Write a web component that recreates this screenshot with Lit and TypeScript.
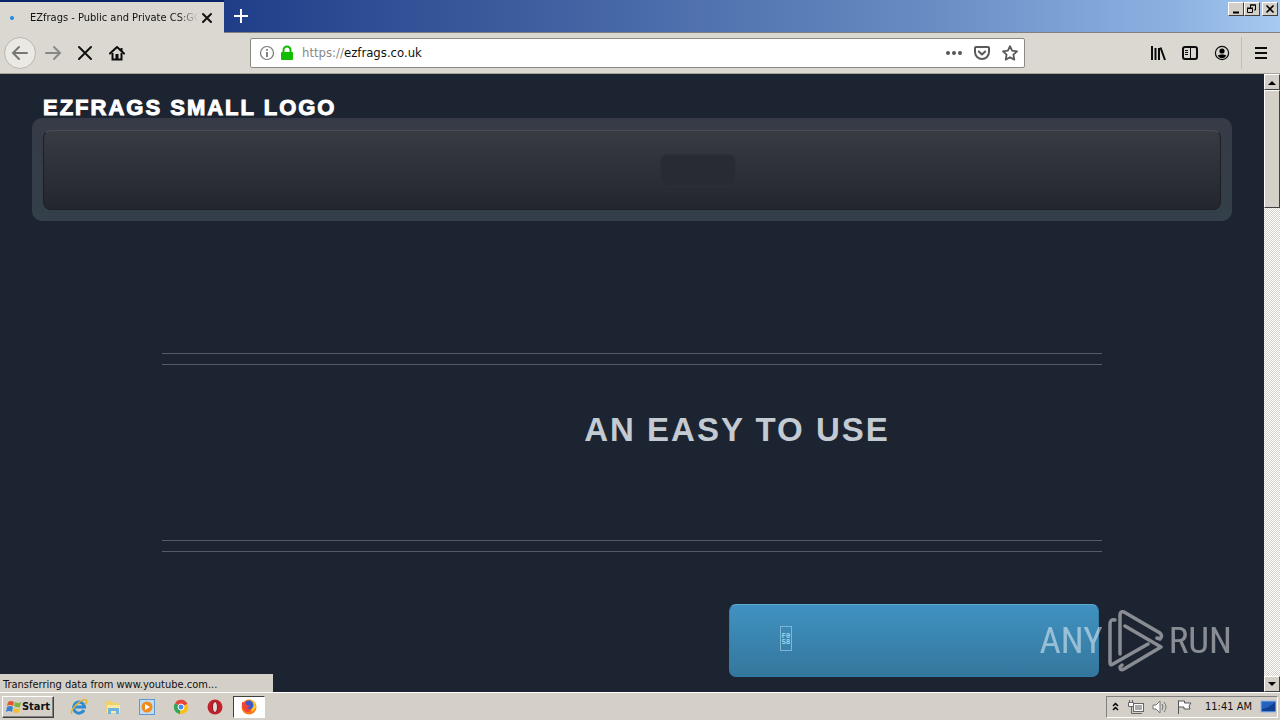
import { LitElement, html, css } from "lit";
import { customElement } from "lit/decorators.js";

@customElement("app-root")
export class AppRoot extends LitElement {
  static styles = css`
    :host { display: grid; grid-template-rows: 33px 41px minmax(0, 1fr) 28px; height: 100vh; overflow: hidden; font: 11px/14px "DejaVu Sans Condensed", "DejaVu Sans", sans-serif; color: #111; }
    * { box-sizing: border-box; }
    button { font: inherit; color: inherit; padding: 0; margin: 0; border: 0; background: none; display: flex; align-items: center; justify-content: center; flex: none; }
    svg { display: block; flex: none; }
    .titlebar { display: flex; align-items: stretch; background: linear-gradient(90deg, #0a246a 0, #22408a 19%, #3c5c9e 40%, #6488bf 70%, #8db2e2 92%, #a6caf0); border-bottom: 1px solid #808080; }
    .tab { display: flex; align-items: center; width: 224px; height: 33px; padding: 0 11px 0 10px; background: #dbd8d1; border-top: 2px solid #0a246a; }
    .dot { width: 4px; height: 4px; margin-right: 16px; border-radius: 50%; background: #1e88e5; }
    .tab-title { flex: 1; min-width: 0; white-space: nowrap; mask-image: linear-gradient(90deg, #000 148px, transparent 168px); }
    .new-tab { width: 33px; }
    .window { display: flex; margin-left: auto; padding: 2px 2px 0 0; align-items: flex-start; }
    .win { width: 16px; height: 14px; background: #d4d0c8; border: 1px solid; border-color: #fff #404040 #404040 #fff; }
    .win:last-child { margin-left: 2px; }
    .toolbar { display: flex; align-items: center; background: #dbd8d1; border-bottom: 1px solid #a8a49c; padding: 0 8px 0 4px; }
    .back { width: 32px; height: 32px; margin-right: 1px; border-radius: 50%; background: #ebe9e4; border: 1px solid #b9b6ae; }
    .tool { width: 32px; height: 32px; }
    .spacer { flex: 1; max-width: 117px; }
    .url { display: flex; align-items: center; flex: 1 1 775px; max-width: 775px; height: 30px; background: #fff; border: 1px solid #8c8a84; border-radius: 2px; padding: 0 0 0 8px; }
    .url-field { flex: 1; min-width: 0; position: relative; display: flex; margin-left: 7px; font-size: 13px; line-height: 16px; }
    .url-field input { width: 100%; border: 0; outline: 0; padding: 0; background: transparent; color: transparent; font: inherit; height: 16px; }
    .url-text { position: absolute; inset: 0; pointer-events: none; }
    .scheme { color: #888; }
    .url button { width: 28px; height: 28px; }
    .right { display: flex; align-items: center; margin-left: auto; }
    .divider { width: 1px; height: 32px; margin: 0 4px 0 3px; background: #c0bdb5; }
    .right .menu { width: 30px; margin-right: -4px; }
    .viewport { display: flex; position: relative; min-height: 0; background: #1d2431; }
    .page { flex: 1; min-width: 0; overflow: hidden; padding: 23px 32px 0; font-family: "Liberation Sans", Arial, sans-serif; }
    .brand { margin: 0; padding-left: 11px; font-size: 22px; line-height: 21px; letter-spacing: 2px; font-weight: 700; color: #fff; -webkit-text-stroke: 1px #fff; text-transform: uppercase; }
    .nav { padding: 12px 11px 11px; border-radius: 10px; background: linear-gradient(#363b47, #333f49); }
    .nav-inner { display: flex; align-items: center; justify-content: center; height: 80px; border-radius: 8px; border: 1px solid #1d1f26; border-top-color: #4b4b55; padding-left: 132px; background: linear-gradient(#393b43, #24262d); }
    .nav-item { width: 74px; height: 31px; border-radius: 6px; background: #292b33; box-shadow: 0 0 1px 1px #2d3038; }
    .hero { max-width: 940px; margin: 132px auto 0; }
    .rule { height: 12px; border: solid #565c66; border-width: 1px 0; }
    .slogan { display: flex; align-items: flex-start; justify-content: center; height: 175px; padding: 45px 0 0 210px; margin: 0; color: #c3cad1; font-size: 33px; line-height: 40px; font-weight: 700; letter-spacing: 2px; text-transform: uppercase; }
    .cta { width: 370px; height: 73px; margin: 52px 3px 0 auto; border-radius: 7px; background: linear-gradient(#4092c1, #34779d); border: 1px solid #347da6; border-top-color: #5fa9d0; justify-content: flex-start; padding: 0 0 4px 50px; }
    .glyph { display: grid; place-content: center; width: 12px; height: 25px; border: 1px solid #82b5d2; color: #d5edf8; font: 7px/6px "Liberation Mono", monospace; }
    .scroll { display: flex; flex-direction: column; width: 16px; flex: none; background: repeating-conic-gradient(#d4d0c8 0 25%, #fff 0 50%) 0 0 / 2px 2px; }
    .scroll button, .thumb { width: 16px; height: 16px; background: #d4d0c8; border: 1px solid; border-color: #fff #404040 #404040 #fff; }
    .thumb { height: 118px; }
    .down { margin-top: auto; }
    .status { position: absolute; left: 0; bottom: 0; width: 273px; height: 18px; padding: 4px 3px 0; background: #d4d0c8; white-space: nowrap; }
    .watermark { position: absolute; right: 48px; bottom: 19px; display: flex; align-items: center; gap: 5px; color: #fff; opacity: .48; font: 400 37px/62px "Roboto Condensed", "Open Sans Condensed", "Liberation Sans Narrow", sans-serif; }
    .taskbar { display: flex; align-items: center; padding: 0 2px; background: #d4d0c8; border-top: 1px solid #fff; }
    .start { width: 52px; height: 22px; font-weight: 700; border: 1px solid; border-color: #fff #404040 #404040 #fff; box-shadow: inset -1px -1px #808080; }
    .apps { display: flex; margin-left: 9px; }
    .app { width: 32px; height: 22px; margin-right: 2px; }
    .app.active { background: #fff; border: 1px solid; border-color: #404040 #fff #fff #404040; }
    .tray { display: flex; align-items: center; margin-left: auto; height: 22px; padding: 0 1px 0 4px; gap: 8px; border: 1px solid; border-color: #808080 #fff #fff #808080; white-space: nowrap; }
    .tray time { margin-left: 5px; }
  `;

  render() {
    return html`
      <header class="titlebar">
        <div class="tab">
          <span class="dot"></span>
          <span class="tab-title">EZfrags - Public and Private CS:GO</span>
          <button aria-label="Close tab"><svg width="12" height="12"><path d="M2 2l8 8M10 2l-8 8" stroke="#111" stroke-width="2" stroke-linecap="round"/></svg></button>
        </div>
        <button class="new-tab" aria-label="New tab"><svg width="16" height="16"><path d="M8 1v14M1 8h14" stroke="#fff" stroke-width="2"/></svg></button>
        <div class="window">
          <button class="win" aria-label="Minimize"><svg width="12" height="12"><path d="M3 9.5h6" stroke="#000" stroke-width="2"/></svg></button>
          <button class="win" aria-label="Restore"><svg width="12" height="12" fill="none" stroke="#000"><path d="M4.5 5V2h5v5H8M4 2h6M1.500 5.500h5v4h-5zM1 5h6"/></svg></button>
          <button class="win" aria-label="Close"><svg width="12" height="12"><path d="M2.500 2.500l7 7M9.500 2.500l-7 7" stroke="#000" stroke-width="1.600"/></svg></button>
        </div>
      </header>

      <nav class="toolbar">
        <button class="back" aria-label="Back"><svg width="18" height="16" fill="none" stroke="#777" stroke-width="2" stroke-linecap="round"><path d="M16 8H2M8 2L2 8l6 6"/></svg></button>
        <button class="tool" aria-label="Forward"><svg width="18" height="16" fill="none" stroke="#888" stroke-width="2" stroke-linecap="round"><path d="M2 8h14M10 2l6 6-6 6"/></svg></button>
        <button class="tool" aria-label="Stop"><svg width="16" height="16" stroke="#111" stroke-width="2" stroke-linecap="round"><path d="M2 2l12 12M14 2L2 14"/></svg></button>
        <button class="tool" aria-label="Home"><svg width="16" height="16"><path d="M1 8.500L8 2l7 6.500" fill="none" stroke="#0c0c0c" stroke-width="2" stroke-linecap="round" stroke-linejoin="round"/><path d="M3.500 8v6.500h9V8M12.500 3v3" fill="none" stroke="#0c0c0c" stroke-width="2"/><path d="M6.500 15V9h3v6z" fill="#0c0c0c"/></svg></button>
        <span class="spacer"></span>
        <div class="url">
          <svg width="16" height="16" fill="none" stroke="#777"><circle cx="8" cy="8" r="6.500" stroke-width="1.200"/><path d="M8 7v5M8 4v1.800" stroke-width="1.800"/></svg>
          <svg width="20" height="16"><rect x="6" y="7" width="12" height="8" rx="1" fill="#12bc00"/><path d="M8.500 8V5a3.500 3.500 0 017 0v3" fill="none" stroke="#12bc00" stroke-width="2"/></svg>
          <label class="url-field"><input aria-label="Address" /><span class="url-text"><span class="scheme">https://</span>ezfrags.co.uk</span></label>
          <button aria-label="Page actions"><svg width="16" height="16" fill="#555"><circle cx="2" cy="8" r="2"/><circle cx="8" cy="8" r="2"/><circle cx="14" cy="8" r="2"/></svg></button>
          <button aria-label="Save to Pocket"><svg width="16" height="16" fill="none" stroke="#5a5a5a" stroke-width="2" stroke-linecap="round" stroke-linejoin="round"><path d="M2 2h12a1 1 0 011 1v4a7 7 0 01-14 0V3a1 1 0 011-1zM4.800 6.500L8 9.500l3.200-3"/></svg></button>
          <button aria-label="Bookmark"><svg width="16" height="16" fill="none" stroke="#5a5a5a" stroke-width="1.800" stroke-linejoin="round"><path d="M8 1.200l2.100 4.500 4.900.6-3.600 3.400.9 4.900L8 12.200l-4.300 2.400.9-4.900L1 6.300l4.900-.6z"/></svg></button>
        </div>
        <div class="right">
          <button class="tool" aria-label="Library"><svg width="16" height="16" stroke="#0c0c0c" stroke-width="2"><path d="M2 1v14M5.500 3v12M9 3v12M10.500 2.500L15 15"/></svg></button>
          <button class="tool" aria-label="Sidebars"><svg width="16" height="16" fill="none" stroke="#0c0c0c"><rect x="1" y="2" width="14" height="12" rx="2" stroke-width="2"/><path d="M8.500 2v12M3 5.500h3M3 7.500h3M3 9.500h3"/></svg></button>
          <button class="tool" aria-label="Account"><svg width="16" height="16"><circle cx="8" cy="8" r="6.600" fill="none" stroke="#0c0c0c" stroke-width="1.200"/><circle cx="8" cy="6" r="2.600"/><path d="M3.600 10.500c2-1.500 6.800-1.500 8.800 0a5 5 0 01-8.800 0z"/></svg></button>
          <span class="divider"></span>
          <button class="tool menu" aria-label="Menu"><svg width="14" height="14" stroke="#0c0c0c" stroke-width="2"><path d="M1 2h12M1 7h12M1 12h12"/></svg></button>
        </div>
      </nav>

      <div class="viewport">
        <main class="page">
          <h1 class="brand">EZfrags small logo</h1>
          <div class="nav"><div class="nav-inner"><div class="nav-item"></div></div></div>
          <section class="hero">
            <div class="rule"></div>
            <h2 class="slogan">An easy to use</h2>
            <div class="rule"></div>
            <button class="cta" aria-label="Download"><span class="glyph"><span>F0</span><span>58</span></span></button>
          </section>
        </main>
        <div class="scroll">
          <button aria-label="Scroll up"><svg width="8" height="5"><path d="M0 5l4-4 4 4z"/></svg></button>
          <div class="thumb"></div>
          <button class="down" aria-label="Scroll down"><svg width="8" height="5"><path d="M0 0l4 4 4-4z"/></svg></button>
        </div>
        <div class="status">Transferring data from www.youtube.com...</div>
        <div class="watermark">
          <span>ANY</span>
          <svg width="56" height="64" viewBox="0 0 56 64" fill="none" stroke="#fff" stroke-width="3.500" stroke-linecap="round" stroke-linejoin="round"><path d="M12 45V6q0-4 4-3l36 21q3 3 0 6l-3-1M17 17l36 21-37 22q-4 2-4-2l2-2M7 11q-5-1-5 4v39q0 3 3 1l35-20"/></svg>
          <span>RUN</span>
        </div>
      </div>

      <footer class="taskbar">
        <button class="start"><svg width="16" height="16"><path d="M2 3q3-2 6 0L7 7Q4 5 1 7z" fill="#e2572b"/><path d="M9 3q3 2 6 0l-1 5q-3 1-6-1z" fill="#7eb33c"/><path d="M1 8q3-2 6 0l-1 5q-3-2-6 0z" fill="#3b7fd0"/><path d="M8 9q3 2 6 0l-1 4q-3 2-6 0z" fill="#f2bd30"/></svg>Start</button>
        <div class="apps">
          <button class="app" aria-label="Internet Explorer"><svg width="18" height="18" fill="none"><path d="M14 12a5.500 5.500 0 11.500-3H5" stroke="#2b8ad6" stroke-width="3"/><path d="M2 16C-1 13 11 0 16 2q2 1-1 5" stroke="#e8b32c" stroke-width="1.500"/></svg></button>
          <button class="app" aria-label="Explorer"><svg width="18" height="18"><path d="M2 3h6l1 2h6v10H2z" fill="#efd069"/><path d="M3 7h13v8H3z" fill="#f8e9a4"/><path d="M4 16v-6h11v6h-3v-3H7v3z" fill="#6db5df"/></svg></button>
          <button class="app" aria-label="Media Player"><svg width="18" height="18"><rect x="1.500" y="1.500" width="15" height="15" fill="#bfdcf2" stroke="#5b9bd0"/><circle cx="9" cy="9" r="5.500" fill="#f28a1d"/><path d="M7 6l5 3-5 3z" fill="#fff"/></svg></button>
          <button class="app" aria-label="Chrome"><svg width="18" height="18"><path d="M9 9L3 5.200A7 7 0 0115.500 6z" fill="#e6453a"/><path d="M9 9L3 5.200A7 7 0 008 16z" fill="#34a653"/><path d="M9 9l6.500-3A7 7 0 018 16z" fill="#fbc116"/><circle cx="9" cy="9" r="3" fill="#4a8af4" stroke="#fff"/></svg></button>
          <button class="app" aria-label="Opera"><svg width="18" height="18"><circle cx="9" cy="9" r="7.500" fill="#c3202b"/><ellipse cx="9" cy="9" rx="2.500" ry="5.500" fill="#ddd" stroke="#8d1018"/></svg></button>
          <button class="app active" aria-label="Firefox"><svg width="18" height="18"><circle cx="9" cy="9" r="7.500" fill="#ff7a1a"/><path d="M10 1q6 3 6 8-2 5-6 4 4-4 0-12z" fill="#ffca2b"/><circle cx="9" cy="7" r="4.500" fill="#3c59c9"/><path d="M2 4q3 0 5 3l3 1-3 2q2 2 5 0-1 5-6 4-5-3-4-10z" fill="#f0433a"/></svg></button>
        </div>
        <div class="tray">
          <svg width="9" height="12" fill="none" stroke="#000" stroke-width="1.500"><path d="M2 5l2.500-2.500L7 5M2 9l2.500-2.500L7 9"/></svg>
          <svg width="16" height="16" fill="none" stroke="#666"><rect x="5.500" y="4.500" width="10" height="8" fill="#aaa"/><path d="M6.500 5.500h8v6h-8z" stroke="#fff"/><path d="M.5 3.500h5v4h-5zM1.500 1v2M4.500 1v2" fill="#fff" stroke="#666"/><path d="M3.500 8v6.500H14"/></svg>
          <svg width="16" height="16" fill="#fff" stroke="#777"><path d="M1 6h3l4-4v12l-4-4H1z"/><path d="M10 5q2 3 0 6M12 3q4 5 0 10" fill="none"/></svg>
          <svg width="16" height="16" fill="#fff" stroke="#555"><path d="M2.500 15V1.500M2.500 2h6v2H15l-2 3 1 3H8V8H3"/></svg>
          <time>11:41 AM</time>
          <svg width="16" height="14"><rect x="1" y="1" width="15" height="11" fill="#2463bd" stroke="#8bb4e4"/><path d="M2 9q7-1 13-7v9H2z" fill="#123f91"/></svg>
        </div>
      </footer>
    `;
  }
}
